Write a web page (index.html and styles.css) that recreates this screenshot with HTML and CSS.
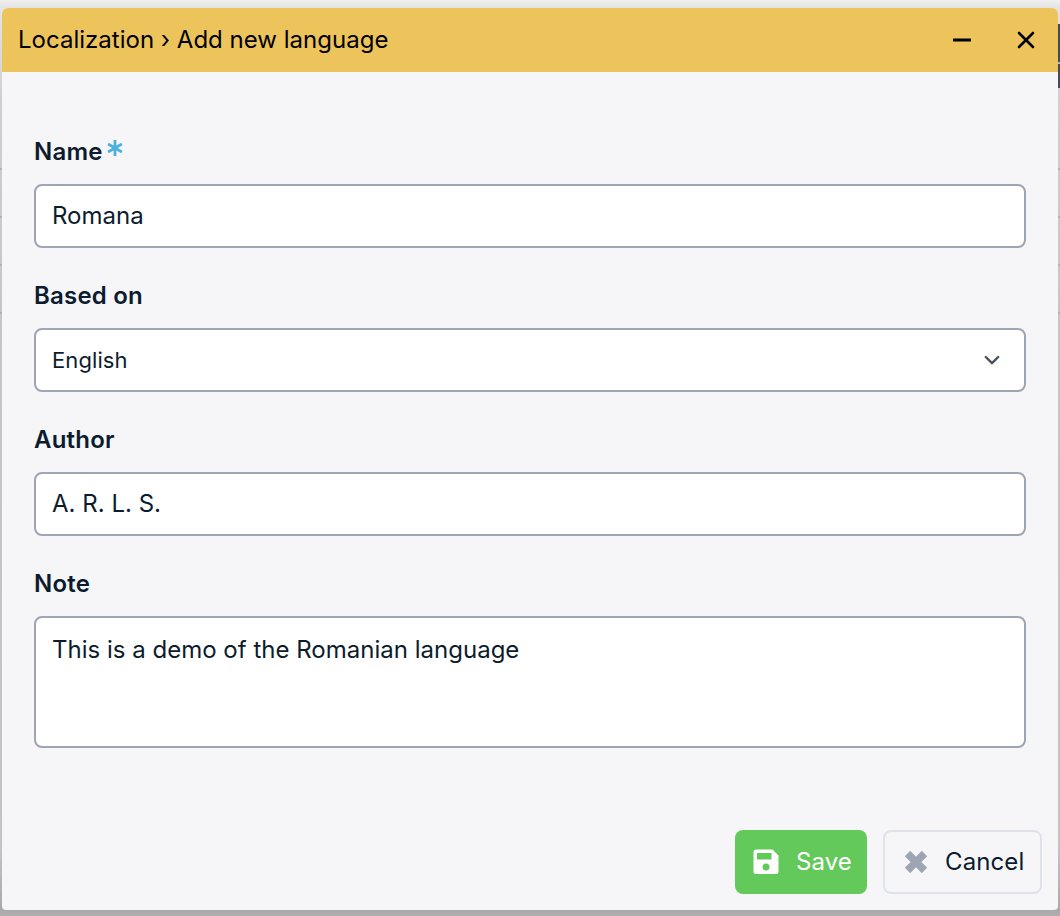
FILE: index.html
```html
<!DOCTYPE html>
<html lang="en">
<head>
<meta charset="utf-8">
<title>Add new language</title>
<link rel="stylesheet" href="styles.css">
</head>
<body>
<div class="backdrop"><div class="backdrop-top"></div><div class="toolbar-edge"></div><div class="row-lines"></div></div>
<main class="dialog">
  <header class="titlebar">
    <h1 class="title">Localization › Add new language</h1>
    <div class="window-actions">
      <svg class="window-icon" viewBox="0 0 24 24"><path d="M3 12H21" stroke="#000" stroke-width="3"/></svg>
      <svg class="window-icon" viewBox="0 0 24 24"><path d="M5 5L19 19M19 5L5 19" stroke="#000" stroke-width="2.6" stroke-linecap="round"/></svg>
    </div>
  </header>
  <form class="form">
    <div class="field">
      <div class="label"><span>Name</span><svg class="required" viewBox="0 0 16 18"><path d="M8 1V17M1.1 5L14.9 13M14.9 5L1.1 13" stroke="#4db1e0" stroke-width="2.8"/></svg></div>
      <div class="control">Romana</div>
    </div>
    <div class="field">
      <div class="label">Based on</div>
      <div class="control select"><span>English</span><svg class="chevron" viewBox="0 0 16 16"><path d="M1.8 5L8 11.2L14.2 5" fill="none" stroke="#485062" stroke-width="2.4" stroke-linecap="round" stroke-linejoin="round"/></svg></div>
    </div>
    <div class="field">
      <div class="label">Author</div>
      <div class="control author">A. R. L. S.</div>
    </div>
    <div class="field">
      <div class="label">Note</div>
      <div class="control note">This is a demo of the Romanian language</div>
    </div>
  </form>
  <footer class="footer">
    <div class="button save"><svg class="save-icon" viewBox="0 0 26 26"><path fill="#fff" fill-rule="evenodd" d="M3 .5H19.5L25.5 6.5V22.5A2.5 2.5 0 0 1 23 25H3A2.5 2.5 0 0 1 .5 22.5V3A2.5 2.5 0 0 1 3 .5ZM4 4V10.5H18.5V4ZM13 14.5A3.5 3.5 0 1 0 13 21.5A3.5 3.5 0 1 0 13 14.5Z"/></svg><span>Save</span></div>
    <div class="button cancel"><svg class="cancel-icon" viewBox="0 0 22 22"><path d="M5.2 .8L11 6.6L16.8 .8L21.2 5.2L15.4 11L21.2 16.8L16.8 21.2L11 15.4L5.2 21.2L.8 16.8L6.6 11L.8 5.2Z" fill="#9da5b4" stroke="#9da5b4" stroke-width="1.3" stroke-linejoin="round"/></svg><span>Cancel</span></div>
  </footer>
</main>
</body>
</html>
```
FILE: styles.css
```css
* { box-sizing: border-box; }
body {
  margin: 0;
  width: 1060px;
  height: 916px;
  padding: 8px 2px 6px;
  overflow: hidden;
  position: relative;
  background: #c5c5c6;
  color: #0c1c2e;
  font: 400 24px/32px Inter, "Liberation Sans", sans-serif;
  letter-spacing: .01px;
}
.backdrop {
  position: absolute;
  inset: 0;
  background: linear-gradient(#e6e6e6, #cfcfcf 100px, #c5c5c6 330px, #c3c3c3 850px, #a9a9a9 910px, #b0b0b0);
}
.backdrop-top { height: 8px; background: linear-gradient(#f0f0f0, #e2e2e2); }
.toolbar-edge {
  position: absolute;
  right: 0;
  top: 24px;
  width: 2px;
  height: 64px;
  background: linear-gradient(#434a59 38px, #b8b8bb 38px 40px, #434a59 40px);
}
.row-lines {
  position: absolute;
  left: 0;
  right: 0;
  top: 168px;
  height: 146px;
  background: repeating-linear-gradient(#b3b3b5 0 2px, transparent 2px 48px);
}
.dialog {
  position: relative;
  height: 902px;
  border-radius: 6px 6px 4px 4px;
  background: #f6f6f9;
  overflow: hidden;
}
.titlebar {
  height: 64px;
  padding: 0 20px 0 16px;
  display: flex;
  align-items: center;
  justify-content: space-between;
  background: #edc45c;
  color: #000;
}
.title { margin: 0; font-size: 24px; font-weight: 400; }
.window-actions { display: flex; gap: 40px; }
.window-icon { width: 24px; height: 24px; }
.form { padding: 64px 32px 0; }
.field { margin-bottom: 32px; }
.label {
  display: flex;
  height: 32px;
  margin-bottom: 16px;
  font-weight: 600;
  letter-spacing: .2px;
}
.required { width: 16px; height: 18px; margin: 3px 0 0 4px; }
.control {
  display: flex;
  align-items: center;
  height: 64px;
  padding: 0 16px;
  border: 2px solid #9da5b4;
  border-radius: 8px;
  background: #fff;
}
.select { justify-content: space-between; padding-right: 24px; font-size: 22px; letter-spacing: .1px; }
.chevron { width: 16px; height: 16px; }
.note { height: 132px; padding-top: 16px; align-items: flex-start; }
.footer { display: flex; justify-content: flex-end; gap: 16px; padding: 50px 16px 0; }
.button { display: flex; align-items: center; height: 64px; border-radius: 8px; letter-spacing: .1px; }
.save { width: 132px; padding-left: 18px; gap: 17px; background: #63c95b; color: #fff; }
.save-icon { width: 26px; height: 26px; }
.cancel { width: 159px; padding-left: 20px; gap: 18px; border: 2px solid #dfe2e9; }
.cancel-icon { width: 22px; height: 22px; }
```
